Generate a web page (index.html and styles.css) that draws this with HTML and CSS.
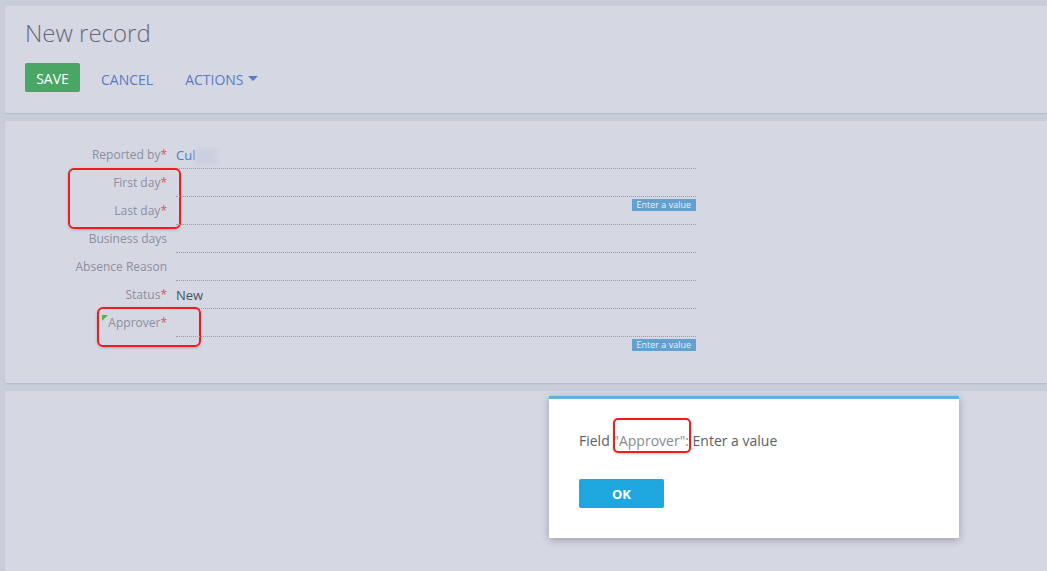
FILE: index.html
```html
<!DOCTYPE html>
<html lang="en">
<head>
    <meta charset="UTF-8">
    <title>New record</title>
    <link rel="stylesheet" href="styles.css">
</head>
<body>
    <div class="panel header">
        <h1>New record</h1>
        <div class="toolbar">
            <button class="btn-save">SAVE</button>
            <a class="btn-link">CANCEL</a>
            <a class="btn-link">ACTIONS <span class="caret"></span></a>
        </div>
    </div>

    <div class="panel form-panel">
        <div class="row">
            <label>Reported by<span class="req">*</span></label>
            <div class="field"><span class="lookup">Cul</span><span class="smudge"></span></div>
        </div>
        <div class="group-hl group-days">
            <div class="row">
                <label>First day<span class="req">*</span></label>
                <div class="field"><span class="hint">Enter a value</span></div>
            </div>
            <div class="row">
                <label>Last day<span class="req">*</span></label>
                <div class="field"></div>
            </div>
        </div>
        <div class="row">
            <label>Business days</label>
            <div class="field"></div>
        </div>
        <div class="row">
            <label>Absence Reason</label>
            <div class="field"></div>
        </div>
        <div class="row">
            <label>Status<span class="req">*</span></label>
            <div class="field"><span class="value">New</span></div>
        </div>
        <div class="row">
            <label class="approver"><span class="flag"></span><span class="mark">Approver<span class="req">*</span></span></label>
            <div class="field"><span class="hint">Enter a value</span></div>
        </div>
    </div>

    <div class="panel bottom">
        <div class="dialog">
            <p>Field <span class="quoted">"Approver":</span> Enter a value</p>
            <button class="btn-ok">OK</button>
        </div>
    </div>
</body>
</html>
```

FILE: styles.css
```css
body {
    margin: 0;
    background: #c9ccd9;
    font-family: 'Open Sans', 'Liberation Sans', Arial, sans-serif;
    padding: 6px 0 0 5px;
    overflow: hidden;
    height: 565px;
    display: flex;
    flex-direction: column;
    gap: 8px;
}
.panel {
    background: #d5d7e3;
    border-radius: 2px 0 0 2px;
    box-shadow: 0 1px 1px #b9bccb;
}
.header {
    height: 107px;
    padding: 0 0 0 20px;
    box-sizing: border-box;
}
h1 {
    margin: 0;
    padding-top: 14px;
    font-weight: 300;
    font-size: 24px;
    line-height: 26px;
    color: #636879;
}
.toolbar {
    display: flex;
    align-items: center;
    margin-top: 17px;
}
.btn-save {
    background: #49a665;
    color: #fff;
    border: none;
    border-radius: 2px;
    font-family: inherit;
    font-size: 14px;
    width: 55px;
    height: 29px;
    padding: 2px 0 0 0;
    margin-right: 21px;
}
.btn-link {
    color: #5a7bc6;
    font-size: 14px;
    margin-right: 32px;
    padding-top: 3px;
    display: flex;
    align-items: center;
    gap: 4px;
}
.caret {
    width: 0;
    height: 0;
    border-left: 5px solid transparent;
    border-right: 5px solid transparent;
    border-top: 5px solid #5a7bc6;
    margin-bottom: 2px;
}
.form-panel {
    height: 262px;
    padding-top: 20px;
    box-sizing: border-box;
}
.row {
    display: flex;
    height: 28px;
}
.row label {
    width: 162px;
    text-align: right;
    font-size: 12px;
    color: #8b8f9c;
    line-height: 28px;
    box-sizing: border-box;
    white-space: nowrap;
}
.req {
    color: #d35a52;
}
.field {
    width: 520px;
    margin-left: 9px;
    border-bottom: 1px dotted #9a9da9;
    height: 27px;
    position: relative;
    line-height: 28px;
    font-size: 13px;
}
.lookup {
    color: #4d7bc7;
}
.smudge {
    display: inline-block;
    width: 22px;
    height: 16px;
    vertical-align: middle;
    background: #cbcfe0;
    filter: blur(2px);
}
.value {
    color: #4a5262;
}
.hint {
    position: absolute;
    right: 0;
    top: 30px;
    background: #62a0cf;
    color: #e6f0f8;
    font-size: 9px;
    line-height: 12px;
    padding: 0 5px;
    z-index: 2;
}
.group-hl {
    position: relative;
}
.group-days::before {
    content: "";
    position: absolute;
    left: 63px;
    top: -1px;
    width: 113px;
    height: 61px;
    border: 2px solid #f21b1b;
    border-radius: 6px;
    box-shadow: 0 1px 3px #0003;
    box-sizing: border-box;
}
.approver {
    position: relative;
}
.approver .mark::after {
    content: "";
    position: absolute;
    left: 92px;
    top: -2px;
    width: 104px;
    height: 40px;
    border: 2px solid #f21b1b;
    border-radius: 6px;
    box-shadow: 0 1px 3px #0003;
    box-sizing: border-box;
}
.flag {
    position: absolute;
    left: 97px;
    top: 6px;
    width: 0;
    height: 0;
    border-top: 6px solid #5fae48;
    border-right: 6px solid transparent;
}
.bottom {
    flex: 1;
    position: relative;
}
.dialog {
    position: absolute;
    left: 544px;
    top: 5px;
    width: 410px;
    height: 142px;
    background: #fff;
    border-top: 3px solid #5cb3e0;
    box-shadow: 0 2px 8px #0004;
    box-sizing: border-box;
    padding: 32px 30px 0 30px;
}
.dialog p {
    margin: 0;
    font-size: 14px;
    color: #5b5e66;
    line-height: 20px;
}
.quoted {
    position: relative;
    color: #888b92;
}
.quoted::after {
    content: "";
    position: absolute;
    left: 0;
    top: -13px;
    right: -2px;
    bottom: -3px;
    border: 2px solid #f21b1b;
    border-radius: 5px;
    box-shadow: 0 1px 3px #0003;
}
.btn-ok {
    margin-top: 28px;
    width: 85px;
    height: 29px;
    background: #1ea6df;
    border: none;
    border-radius: 2px;
    color: #fff;
    font-family: inherit;
    font-weight: bold;
    font-size: 13px;
}
```
